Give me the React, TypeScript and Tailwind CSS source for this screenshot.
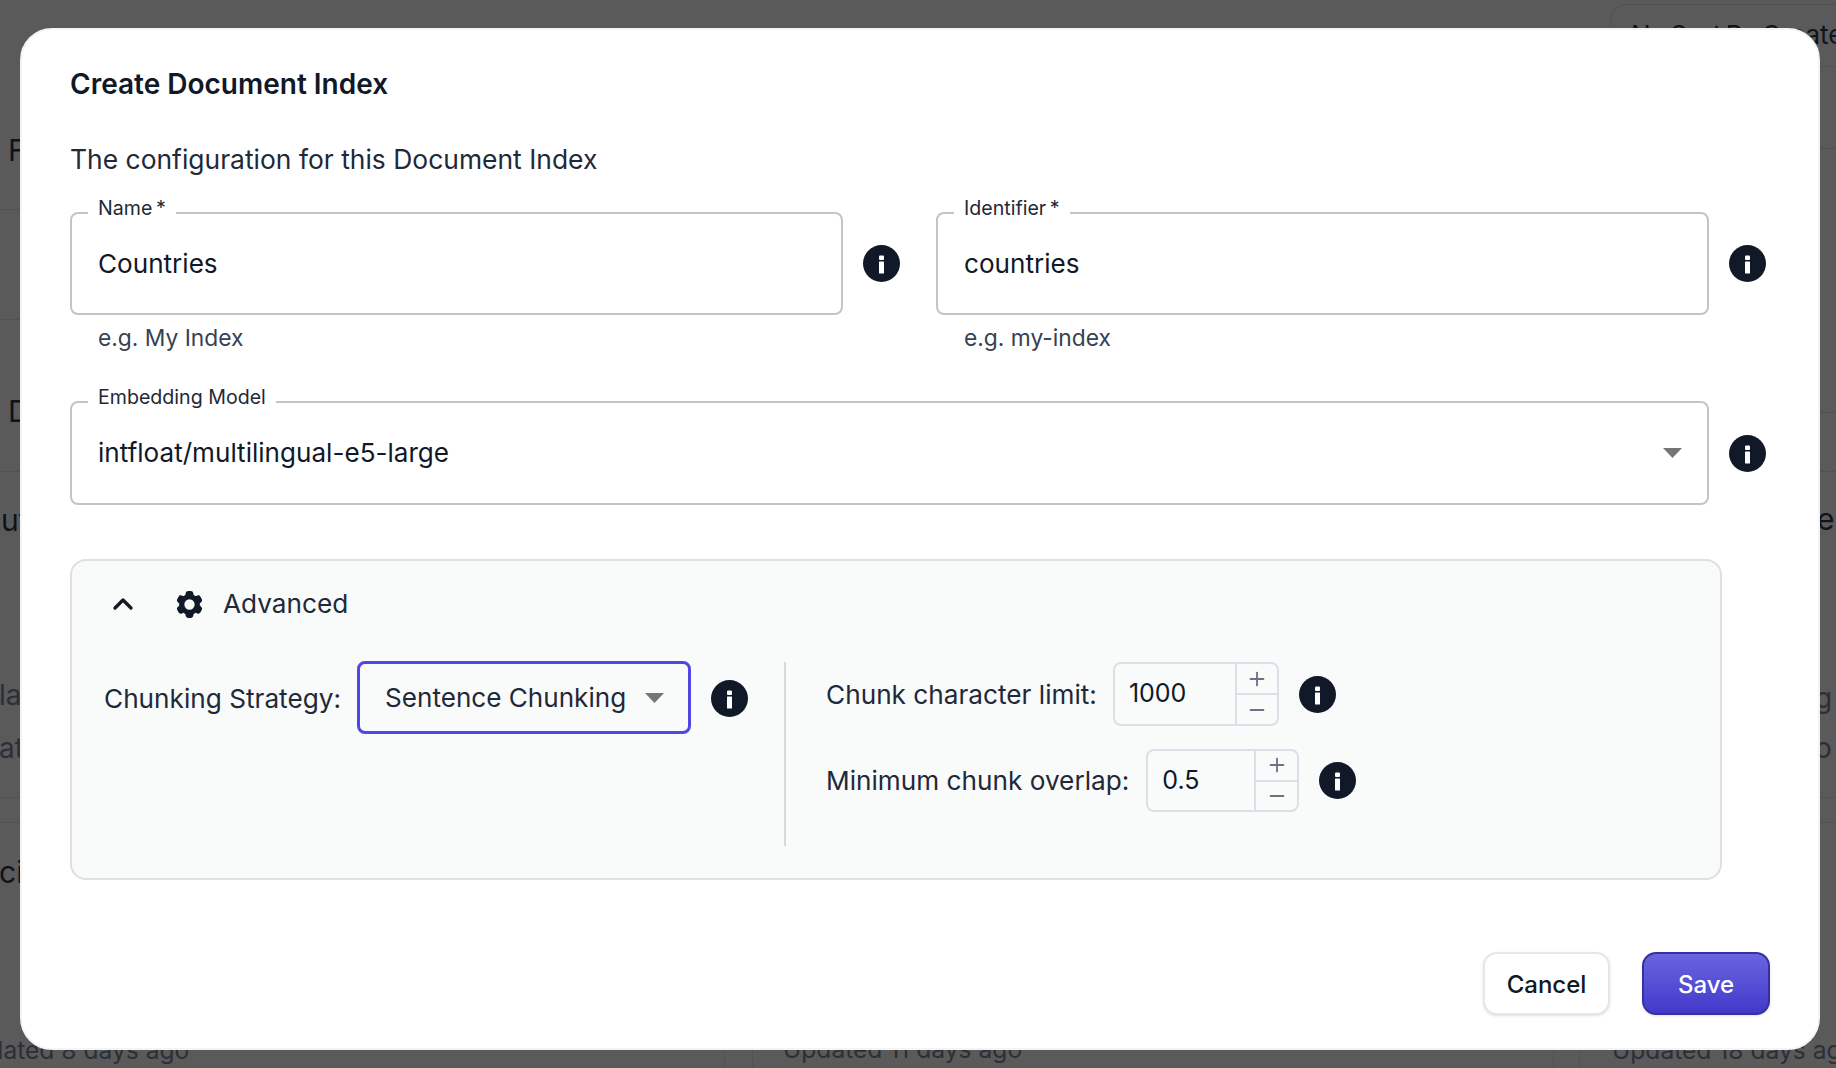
import { ChevronUp, Minus, Plus } from 'lucide-react';
import { HiCog6Tooth } from 'react-icons/hi2';

function InfoIcon() {
  return (
    <svg viewBox="0 0 37 37" className="w-[37px] h-[37px] shrink-0">
      <circle cx="18.5" cy="18.5" r="18.5" fill="#111827" />
      <rect x="16" y="10.5" width="5" height="4.5" rx="1" fill="#fff" />
      <rect x="16" y="16.5" width="5" height="12" rx="0.5" fill="#fff" />
    </svg>
  );
}

function CaretIcon() {
  return (
    <svg viewBox="0 0 19 10" className="w-[19px] h-[10px] shrink-0">
      <path d="M0 0h19l-9.5 10z" fill="#757575" />
    </svg>
  );
}

function Field({ label, value, hint }: { label: string; value: string; hint: string }) {
  return (
    <div className="flex-1">
      <div className="flex items-center gap-[20px]">
        <div className="relative flex-1 h-[103px] border-2 border-[#c4c4c4] rounded-lg flex items-center pl-[26px] text-[26.1px] text-[#111827]">
          <span className="absolute left-[16px] -top-[18px] bg-white px-[10px] text-[19.6px] leading-[24px] text-[#1f2937]">
            {label}
          </span>
          {value}
        </div>
        <InfoIcon />
      </div>
      <div className="mt-[7px] pl-[28px] text-[22.8px] leading-[32px] text-[#374151]">{hint}</div>
    </div>
  );
}

function Stepper({ value, h, inputWidth, buttonWidth }: { value: string; h: string; inputWidth: string; buttonWidth: string }) {
  return (
    <div className={`flex ${h} border-2 border-[#dbe0e8] rounded-lg overflow-hidden`}>
      <div className={`${inputWidth} flex items-center pl-[14px] text-[25px] text-[#111827]`}>{value}</div>
      <div className={`${buttonWidth} border-l-2 border-[#dbe0e8] flex flex-col`}>
        <div className="flex-1 flex items-center justify-center border-b-2 border-[#dbe0e8]">
          <Plus size={22} strokeWidth={2} className="text-[#6b7280]" />
        </div>
        <div className="flex-1 flex items-center justify-center">
          <Minus size={22} strokeWidth={2} className="text-[#6b7280]" />
        </div>
      </div>
    </div>
  );
}

function BgRow({ h, text, line, color }: { h: string; text?: string; line?: boolean; color?: string }) {
  return (
    <div className={`${h} flex items-center whitespace-nowrap ${line ? 'border-b border-[#525252]' : ''} ${color ?? ''}`}>
      {text}
    </div>
  );
}

export default function App() {
  const dark = 'text-[#10131a] text-[30px]';
  const grey = 'text-[#2c2f36] text-[28px]';
  const foot = 'text-[#2c2f36] text-[24.6px]';

  return (
    <div className="relative h-[1068px] w-[1836px] overflow-hidden bg-[#5a5a5a] [font-family:Inter,sans-serif]">
      {/* page behind the dialog, dimmed */}
      <div className="flex">
        <div className="w-[725px] shrink-0 h-[1068px]">
          <BgRow h="h-[120px]" />
          <BgRow h="h-[60px] pl-[8px]" text="F" color={dark} />
          <BgRow h="h-[30px]" line />
          <BgRow h="h-[110px]" line />
          <BgRow h="h-[61px]" />
          <BgRow h="h-[60px] pl-[8px]" text="D" color={dark} />
          <BgRow h="h-[31px]" line />
          <BgRow h="h-[28px]" />
          <BgRow h="h-[40px] pl-[1px]" text="ut" color={dark} />
          <BgRow h="h-[135px]" />
          <BgRow h="h-[40px] -ml-[1px]" text="lat" color={grey} />
          <BgRow h="h-[13px]" />
          <BgRow h="h-[40px] -ml-[1px]" text="at" color={grey} />
          <BgRow h="h-[30px]" line />
          <BgRow h="h-[25px]" line />
          <BgRow h="h-[29px]" />
          <BgRow h="h-[40px] -ml-[1px]" text="ci" color={dark} />
          <BgRow h="h-[139px]" />
          <BgRow h="h-[38px] -ml-[45px] border-r border-[#525252]" text="Updated 8 days ago" color={foot} />
        </div>
        <div className="w-[802px] shrink-0 h-[1068px] ml-[27px] flex flex-col justify-end">
          <BgRow h="h-[38px] pl-[30px] border-x border-[#525252]" text="Updated 11 days ago" color={foot} />
        </div>
        <div className="flex-1 h-[1068px] ml-[25px]">
          <BgRow h="h-[4px]" />
          <div className="ml-[31px] w-[400px] h-[63px] border border-[#525252] rounded-2xl pl-[20px] pt-[12px] text-[26px] leading-[36px] [word-spacing:-3px] text-[#10131a] whitespace-nowrap">
            No Sort By Created
          </div>
          <BgRow h="h-[82px]" line />
          <BgRow h="h-[264px]" line />
          <BgRow h="h-[59px]" line />
          <BgRow h="h-[27px]" />
          <BgRow h="h-[40px] pl-[238px]" text="e" color={dark} />
          <BgRow h="h-[139px]" />
          <BgRow h="h-[40px] pl-[236px]" text="g" color={grey} />
          <BgRow h="h-[10px]" />
          <BgRow h="h-[40px] pl-[236px]" text="o" color={grey} />
          <BgRow h="h-[30px]" line />
          <BgRow h="h-[25px]" line />
          <BgRow h="h-[208px]" />
          <BgRow h="h-[38px] pl-[32px] border-l border-[#525252]" text="Updated 18 days ago" color={foot} />
        </div>
      </div>

      {/* dialog */}
      <div className="absolute left-[20px] top-[28px] w-[1800px] h-[1022px] bg-white border-2 border-[#f3f4f6] rounded-[32px] pt-[34px] pl-[48px]">
        <h2 className="text-[28px] leading-[41px] font-semibold text-[#111827]">Create Document Index</h2>
        <p className="mt-[34px] text-[26.45px] leading-[40px] text-[#1f2937]">
          The configuration for this Document Index
        </p>

        <div className="mt-[33px] w-[1696px] flex gap-[36px]">
          <Field label={'Name\u2009*'} value="Countries" hint="e.g. My Index" />
          <Field label={'Identifier\u2009*'} value="countries" hint="e.g. my-index" />
        </div>

        <div className="mt-[47px] w-[1696px] flex items-center gap-[20px]">
          <div className="relative flex-1 h-[104px] border-2 border-[#c4c4c4] rounded-lg flex items-center justify-between pl-[26px] pr-[25px] text-[26.1px] text-[#111827]">
            <span className="absolute left-[16px] -top-[18px] bg-white px-[10px] text-[19.6px] leading-[24px] text-[#1f2937]">
              Embedding Model
            </span>
            intfloat/multilingual-e5-large
            <CaretIcon />
          </div>
          <InfoIcon />
        </div>

        <div className="mt-[54px] w-[1652px] h-[321px] bg-[#f9fafa] border-2 border-[#dfe1e1] rounded-2xl pt-[25px] pl-[32px]">
          <div className="flex items-center h-[36px] text-[#111827]">
            <ChevronUp size={32} strokeWidth={2.5} className="ml-[3px]" />
            <HiCog6Tooth className="ml-[34px] w-[33px] h-[33px]" />
            <span className="ml-[17px] text-[26.2px] text-[#1f2937]">Advanced</span>
          </div>
          <div className="mt-[39px] flex h-[185px]">
            <div className="flex items-start">
              <span className="text-[26.2px] leading-[76px] text-[#1f2937] whitespace-nowrap">Chunking Strategy:</span>
              <div className="ml-[16px] w-[334px] h-[73px] border-[3.5px] border-[#4f46e5] rounded-lg flex items-center justify-between pl-[25px] pr-[24px] text-[26.1px] text-[#1f2937]">
                Sentence Chunking
                <CaretIcon />
              </div>
              <div className="ml-[20px] mt-[19px]">
                <InfoIcon />
              </div>
            </div>
            <div className="ml-[36px] mt-[1px] w-[2px] bg-[#d9d9d9]" />
            <div className="ml-[40px] mt-[1px] flex flex-col gap-[23px]">
              <div className="flex items-center gap-[16px]">
                <span className="mt-[2px] text-[26.2px] text-[#1f2937] whitespace-nowrap">Chunk character limit:</span>
                <Stepper value="1000" h="h-[64px]" inputWidth="w-[120px]" buttonWidth="w-[42px]" />
                <div className="ml-[4px]">
                  <InfoIcon />
                </div>
              </div>
              <div className="flex items-center gap-[17px]">
                <span className="text-[26.2px] text-[#1f2937] whitespace-nowrap">Minimum chunk overlap:</span>
                <Stepper value="0.5" h="h-[63px]" inputWidth="w-[106px]" buttonWidth="w-[43px]" />
                <div className="ml-[3px]">
                  <InfoIcon />
                </div>
              </div>
            </div>
          </div>
        </div>

        <div className="mt-[72px] w-[1700px] flex justify-end gap-[32px]">
          <button className="w-[127px] h-[63px] pt-[2px] bg-white border-2 border-[#e5e7eb] rounded-[14px] shadow-sm text-[24px] font-medium text-[#111827]">
            Cancel
          </button>
          <button className="w-[128px] h-[63px] pt-[2px] bg-gradient-to-b from-[#6a64e0] to-[#4338ca] border-2 border-[#3730a3] rounded-[14px] shadow-sm text-[24px] font-medium text-white">
            Save
          </button>
        </div>
      </div>
    </div>
  );
}
